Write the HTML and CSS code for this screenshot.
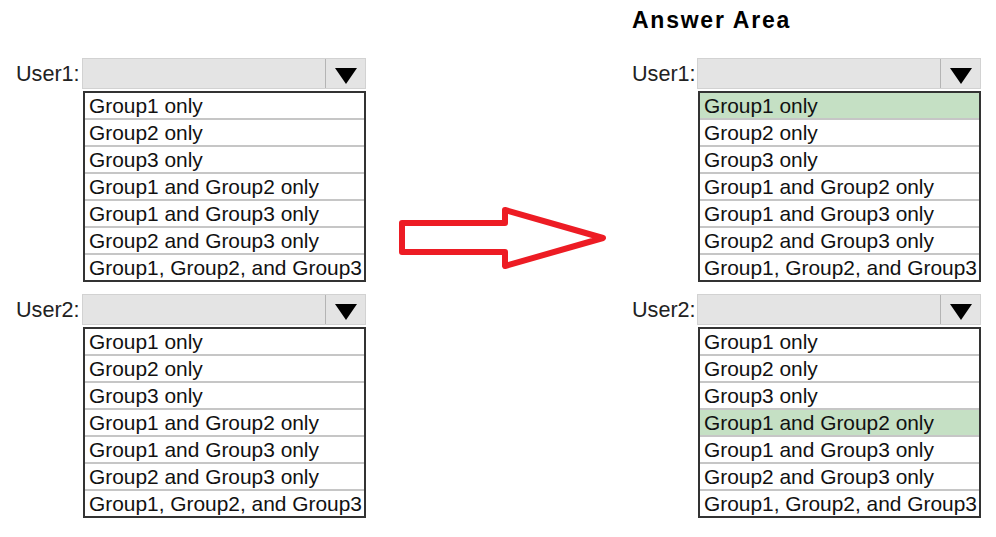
FILE: index.html
```html
<!DOCTYPE html>
<html lang="en">
<head>
<meta charset="utf-8">
<title>Answer Area</title>
<link rel="stylesheet" href="styles.css">
</head>
<body>
<div class="page">
  <section class="panel panel-left">
    <div class="title"></div>
    <div class="question">
      <span class="label">User1:</span>
      <div class="dropdown">
        <div class="select"><span class="field"></span><span class="btn"><span class="tri"></span></span></div>
        <ul class="options">
          <li>Group1 only</li>
          <li>Group2 only</li>
          <li>Group3 only</li>
          <li>Group1 and Group2 only</li>
          <li>Group1 and Group3 only</li>
          <li>Group2 and Group3 only</li>
          <li>Group1, Group2, and Group3</li>
        </ul>
      </div>
    </div>
    <div class="question">
      <span class="label">User2:</span>
      <div class="dropdown">
        <div class="select"><span class="field"></span><span class="btn"><span class="tri"></span></span></div>
        <ul class="options">
          <li>Group1 only</li>
          <li>Group2 only</li>
          <li>Group3 only</li>
          <li>Group1 and Group2 only</li>
          <li>Group1 and Group3 only</li>
          <li>Group2 and Group3 only</li>
          <li>Group1, Group2, and Group3</li>
        </ul>
      </div>
    </div>
  </section>

  <div class="arrow">
    <svg width="266" height="80" viewBox="366 200 266 80" aria-hidden="true">
      <polygon points="402,223 505,223 505,210 603,238 505,266 505,252 402,252" fill="none" stroke="#ed1c24" stroke-width="6" stroke-linejoin="round"/>
    </svg>
  </div>

  <section class="panel panel-right">
    <div class="title">Answer Area</div>
    <div class="question">
      <span class="label">User1:</span>
      <div class="dropdown">
        <div class="select"><span class="field"></span><span class="btn"><span class="tri"></span></span></div>
        <ul class="options">
          <li class="selected">Group1 only</li>
          <li>Group2 only</li>
          <li>Group3 only</li>
          <li>Group1 and Group2 only</li>
          <li>Group1 and Group3 only</li>
          <li>Group2 and Group3 only</li>
          <li>Group1, Group2, and Group3</li>
        </ul>
      </div>
    </div>
    <div class="question">
      <span class="label">User2:</span>
      <div class="dropdown">
        <div class="select"><span class="field"></span><span class="btn"><span class="tri"></span></span></div>
        <ul class="options">
          <li>Group1 only</li>
          <li>Group2 only</li>
          <li>Group3 only</li>
          <li class="selected">Group1 and Group2 only</li>
          <li>Group1 and Group3 only</li>
          <li>Group2 and Group3 only</li>
          <li>Group1, Group2, and Group3</li>
        </ul>
      </div>
    </div>
  </section>
</div>
</body>
</html>
```

FILE: styles.css
```css
html, body {
  margin: 0;
  padding: 0;
  background: #ffffff;
}

body {
  font-family: "Liberation Sans", Arial, sans-serif;
  color: #111;
}

.page {
  display: flex;
  align-items: flex-start;
  width: 996px;
  height: 537px;
}

.panel {
  display: flex;
  flex-direction: column;
}

.panel-left {
  padding-left: 16px;
  width: 350px;
}

.panel-right {
  width: 349px;
}

.title {
  height: 58px;
  line-height: 40px;
  font-size: 23px;
  font-weight: bold;
  letter-spacing: 1.75px;
  color: #000;
}

.question {
  display: flex;
  align-items: flex-start;
}

.question + .question {
  margin-top: 12px;
}

.label {
  font-size: 21.6px;
  line-height: 31px;
  color: #222;
  width: 66px;
  flex: none;
}

.panel-right .label {
  width: 65px;
}

.dropdown {
  width: 284px;
  flex: none;
}

.select {
  display: flex;
  height: 31px;
  box-sizing: border-box;
  border: 1px solid #d2d2d2;
  background: #e4e4e4;
}

.field {
  flex: 1;
}

.btn {
  width: 39px;
  border-left: 1px solid #b4b4b4;
  display: flex;
  justify-content: center;
  align-items: center;
}

.tri {
  width: 0;
  height: 0;
  border-left: 11px solid transparent;
  border-right: 11px solid transparent;
  border-top: 16px solid #000;
  margin-top: 4px;
}

.options {
  list-style: none;
  margin: 2px 0 0 1px;
  padding: 0;
  border: 2px solid #333;
  background: #fff;
}

.options li {
  height: 25px;
  line-height: 26px;
  padding-left: 4px;
  font-size: 20.9px;
  color: #111;
  white-space: nowrap;
  overflow: hidden;
}

.options li + li {
  border-top: 2px solid #c6c6c6;
}

.options li.selected {
  background: #c5e0c4;
}

.arrow {
  width: 266px;
  flex: none;
  padding-top: 200px;
}

.arrow svg {
  display: block;
}
```
